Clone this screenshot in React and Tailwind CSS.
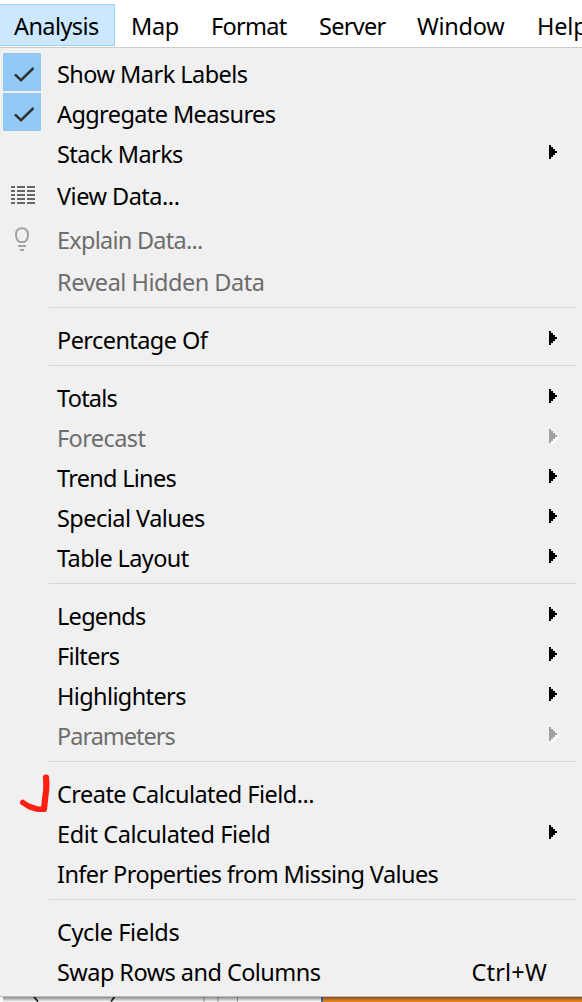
const bar = [
  { label: 'Analysis', cls: 'w-[115px] pl-[14px] tracking-[-0.6px] bg-[#cce8ff] border border-l-0 border-[#99d1ff]' },
  { label: 'Map', cls: 'w-[80px] pl-[15px] tracking-[-0.4px] border border-transparent' },
  { label: 'Format', cls: 'w-[108px] pl-[15px] tracking-[-0.7px] border border-transparent' },
  { label: 'Server', cls: 'w-[98px] pl-[15px] tracking-[-0.7px] border border-transparent' },
  { label: 'Window', cls: 'w-[119px] pl-[15px] tracking-[-0.3px] border border-transparent' },
  { label: 'Help', cls: 'w-[80px] pl-[16px] tracking-[-0.2px] border border-transparent' },
];

const groups = [
  [
    { label: 'Show Mark Labels', cls: 'tracking-[-0.54px]', icon: 'check' },
    { label: 'Aggregate Measures', cls: 'tracking-[-0.6px]', icon: 'check' },
    { label: 'Stack Marks', cls: 'tracking-[-0.62px]', sub: true },
    { label: 'View Data...', cls: 'tracking-[-0.5px]', icon: 'table', tall: true },
    { label: 'Explain Data...', cls: 'tracking-[-0.75px]', icon: 'bulb', tall: true, disabled: true },
    { label: 'Reveal Hidden Data', cls: 'tracking-[-0.49px]', disabled: true },
  ],
  [{ label: 'Percentage Of', cls: 'tracking-[-0.57px]', sub: true }],
  [
    { label: 'Totals', cls: 'tracking-[-0.75px]', sub: true },
    { label: 'Forecast', cls: 'tracking-[-0.6px]', sub: true, disabled: true },
    { label: 'Trend Lines', cls: 'tracking-[-0.72px]', sub: true },
    { label: 'Special Values', cls: 'tracking-[-0.53px]', sub: true },
    { label: 'Table Layout', cls: 'tracking-[-0.62px]', sub: true },
  ],
  [
    { label: 'Legends', cls: 'tracking-[-0.72px]', sub: true },
    { label: 'Filters', cls: 'tracking-[-0.65px]', sub: true },
    { label: 'Highlighters', cls: 'tracking-[-0.62px]', sub: true },
    { label: 'Parameters', cls: 'tracking-[-1px]', sub: true, disabled: true },
  ],
  [
    { label: 'Create Calculated Field...', cls: 'tracking-[-0.53px]', icon: 'mark' },
    { label: 'Edit Calculated Field', cls: 'tracking-[-0.4px]', sub: true },
    { label: 'Infer Properties from Missing Values', cls: 'tracking-[-0.59px]' },
  ],
  [
    { label: 'Cycle Fields', cls: 'tracking-[-0.38px]' },
    { label: 'Swap Rows and Columns', cls: 'tracking-[-0.55px]', shortcut: 'Ctrl+W' },
  ],
];

function RowIcon({ name }) {
  if (name === 'check')
    return (
      <svg className="mt-px ml-[3px] h-[38px] w-[38px] bg-[#91c8f6]" viewBox="0 0 38 38" fill="none">
        <path d="M12 21.3 18 27.2 30.5 15" stroke="#333" strokeWidth="2.5" />
      </svg>
    );
  if (name === 'table')
    return (
      <svg className="mt-[14px] ml-[11px] h-[18px] w-[24px]" viewBox="0 0 24 18" fill="#666" shapeRendering="crispEdges">
        {[0, 4, 8, 12, 16].map((y) => (
          <path key={y} d={`M0 ${y}h4v2h-4zM6 ${y}h8v2h-8zM16 ${y}h8v2h-8z`} />
        ))}
      </svg>
    );
  if (name === 'bulb')
    return (
      <svg className="mt-[11px] ml-[14px] h-[24px] w-[16px]" viewBox="0 0 16 24" fill="none" stroke="#a3a3a3" strokeWidth="2">
        <path d="M5.5 15C3.3 13.600 2 11 2 7.8 2 3.700 4.400 1.200 8 1.200S14 3.700 14 7.800C14 11 12.700 13.600 10.500 15Z" strokeLinejoin="round" />
        <path d="M4 19H12M6 23H10" />
      </svg>
    );
  if (name === 'mark')
    return (
      <svg className="ml-[18px] h-[40px] w-[34px]" viewBox="0 0 34 40" fill="none" stroke="#ff1e12" strokeLinecap="round" strokeLinejoin="round">
        <path d="M28 5.500C28.500 12 28.500 19 27.500 23L26 37" strokeWidth="6.200" />
        <path d="M4.800 30.500 11 34.500 19 37 25 37.300" strokeWidth="5.600" />
      </svg>
    );
  return null;
}

const arrow = 'M0 0h2v2h2v2h2v2h2v2h-2v2h-2v2h-2v2h-2z';

function Arrow({ disabled }) {
  return (
    <svg className="mt-[13px] mr-[23px] h-[16px] w-[10px] shrink-0" viewBox="0 0 10 16" shapeRendering="crispEdges">
      {disabled && <path d={arrow} fill="#fff" transform="translate(2 2)" />}
      <path d={arrow} fill={disabled ? '#a0a0a0' : '#000'} />
    </svg>
  );
}

function Row({ item }) {
  return (
    <li className={`flex items-start ${item.tall ? 'h-[44px]' : 'h-[40px]'} ${item.disabled ? 'text-[#6d6d6d]' : 'text-black'}`}>
      <span className="w-[57px] shrink-0"><RowIcon name={item.icon} /></span>
      <span className={`grow leading-[32px] ${item.tall ? 'mt-[8px]' : 'mt-[6px]'} ${item.cls}`}>{item.label}</span>
      {item.shortcut && <span className="mt-[6px] mr-[35px] leading-[32px] tracking-[0.2px]">{item.shortcut}</span>}
      {item.sub && <Arrow disabled={item.disabled} />}
    </li>
  );
}

export default function App() {
  return (
    <div className="flex h-[1002px] w-[582px] flex-col overflow-hidden bg-white font-['Noto_Sans','Open_Sans',sans-serif] text-[23.5px] whitespace-nowrap text-black">
      <nav className="flex h-[47px] w-[600px] shrink-0 pt-[4px]">
        {bar.map((b) => (
          <span key={b.label} className={`h-[42px] shrink-0 pt-[5px] leading-[32px] ${b.cls}`}>{b.label}</span>
        ))}
      </nav>
      <div className="flex h-[950px] shrink-0 flex-col border-t border-b border-t-[#ccc] border-b-[#bbb] bg-[#f0f0f0] pt-[4px]">
        {groups.map((g, i) => (
          <ul key={i}>
            {i > 0 && <li className="mr-[5px] ml-[49px] h-[18px] pt-[7px]"><div className="h-px bg-[#d7d7d7]" /></li>}
            {g.map((item) => <Row key={item.label} item={item} />)}
          </ul>
        ))}
      </div>
      <div className="relative flex h-[5px] overflow-hidden bg-[#fafafa]">
        <svg className="h-[5px] w-[203px] shrink-0" viewBox="0 0 203 5" stroke="#222" strokeWidth="1.800">
          <path d="M34 0 38 4.500M114.500 0 111 4.500" />
        </svg>
        <div className="w-[2px] bg-[#ccc]" />
        <div className="w-[12px]" />
        <div className="w-[2px] bg-[#ccc]" />
        <div className="w-[18px]" />
        <div className="w-px bg-[#aaa]" />
        <div className="w-[83px] bg-white" />
        <div className="w-[2px] bg-[#4e79a7]" />
        <div className="grow bg-[#f28e2b]" />
        <div className="absolute inset-0 left-[3px] bg-linear-to-b from-black/45 to-transparent" />
      </div>
    </div>
  );
}
